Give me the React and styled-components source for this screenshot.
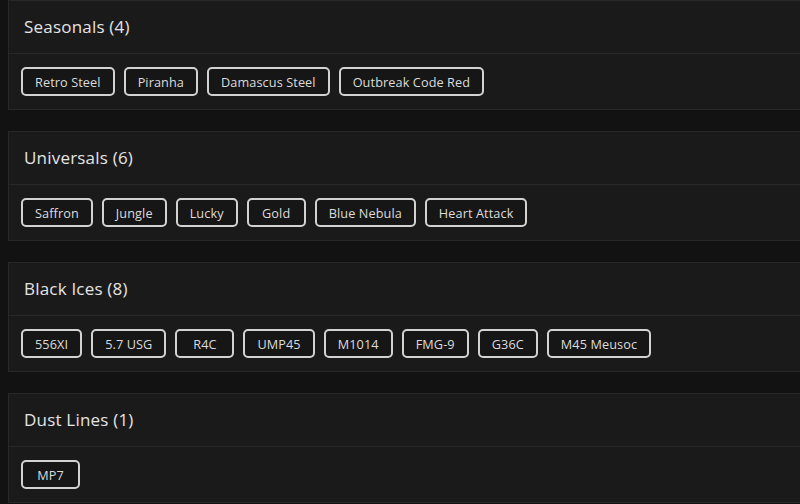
import React from "react";
import styled, { createGlobalStyle } from "styled-components";

const Global = createGlobalStyle`
  html, body { margin: 0; padding: 0; background: #121212; }
  body { font-family: "Open Sans", "Liberation Sans", sans-serif; overflow: hidden; }
  * { box-sizing: border-box; }
`;

const Page = styled.div`
  padding: 0 0 0 8px;
  width: 800px;
  height: 504px;
  overflow: hidden;
  display: flex;
  flex-direction: column;
  gap: 21px;
`;

const Card = styled.section`
  width: 800px;
  flex-shrink: 0;
  background: #1a1a1a;
  border: 1px solid #282828;
`;

const Header = styled.div`
  height: 53px;
  display: flex;
  align-items: center;
  padding: 0 15px 1px;
  border-bottom: 1px solid #282828;
`;

const Title = styled.h2`
  margin: 0;
  font-size: 17px;
  font-weight: 500;
  color: #e4e4e4;
  letter-spacing: 0.2px;
`;

const Body = styled.div`
  height: 55px;
  padding: 13px 12px;
  display: flex;
  gap: 9px;
`;

const Chip = styled.span`
  height: 29px;
  min-width: 59px;
  padding: 0 12px;
  display: inline-flex;
  align-items: center;
  justify-content: center;
  border: 2px solid #d2d2d2;
  border-radius: 5px;
  background: #161616;
  color: #dcdcdc;
  font-size: 12.7px;
  letter-spacing: 0.1px;
  white-space: nowrap;
`;

const groups = [
  { name: "Seasonals", items: ["Retro Steel", "Piranha", "Damascus Steel", "Outbreak Code Red"] },
  { name: "Universals", items: ["Saffron", "Jungle", "Lucky", "Gold", "Blue Nebula", "Heart Attack"] },
  { name: "Black Ices", items: ["556XI", "5.7 USG", "R4C", "UMP45", "M1014", "FMG-9", "G36C", "M45 Meusoc"] },
  { name: "Dust Lines", items: ["MP7"] },
];

export default function App() {
  return (
    <>
      <Global />
      <Page>
        {groups.map((g) => (
          <Card key={g.name}>
            <Header>
              <Title>
                {g.name} ({g.items.length})
              </Title>
            </Header>
            <Body>
              {g.items.map((it) => (
                <Chip key={it}>{it}</Chip>
              ))}
            </Body>
          </Card>
        ))}
      </Page>
    </>
  );
}
